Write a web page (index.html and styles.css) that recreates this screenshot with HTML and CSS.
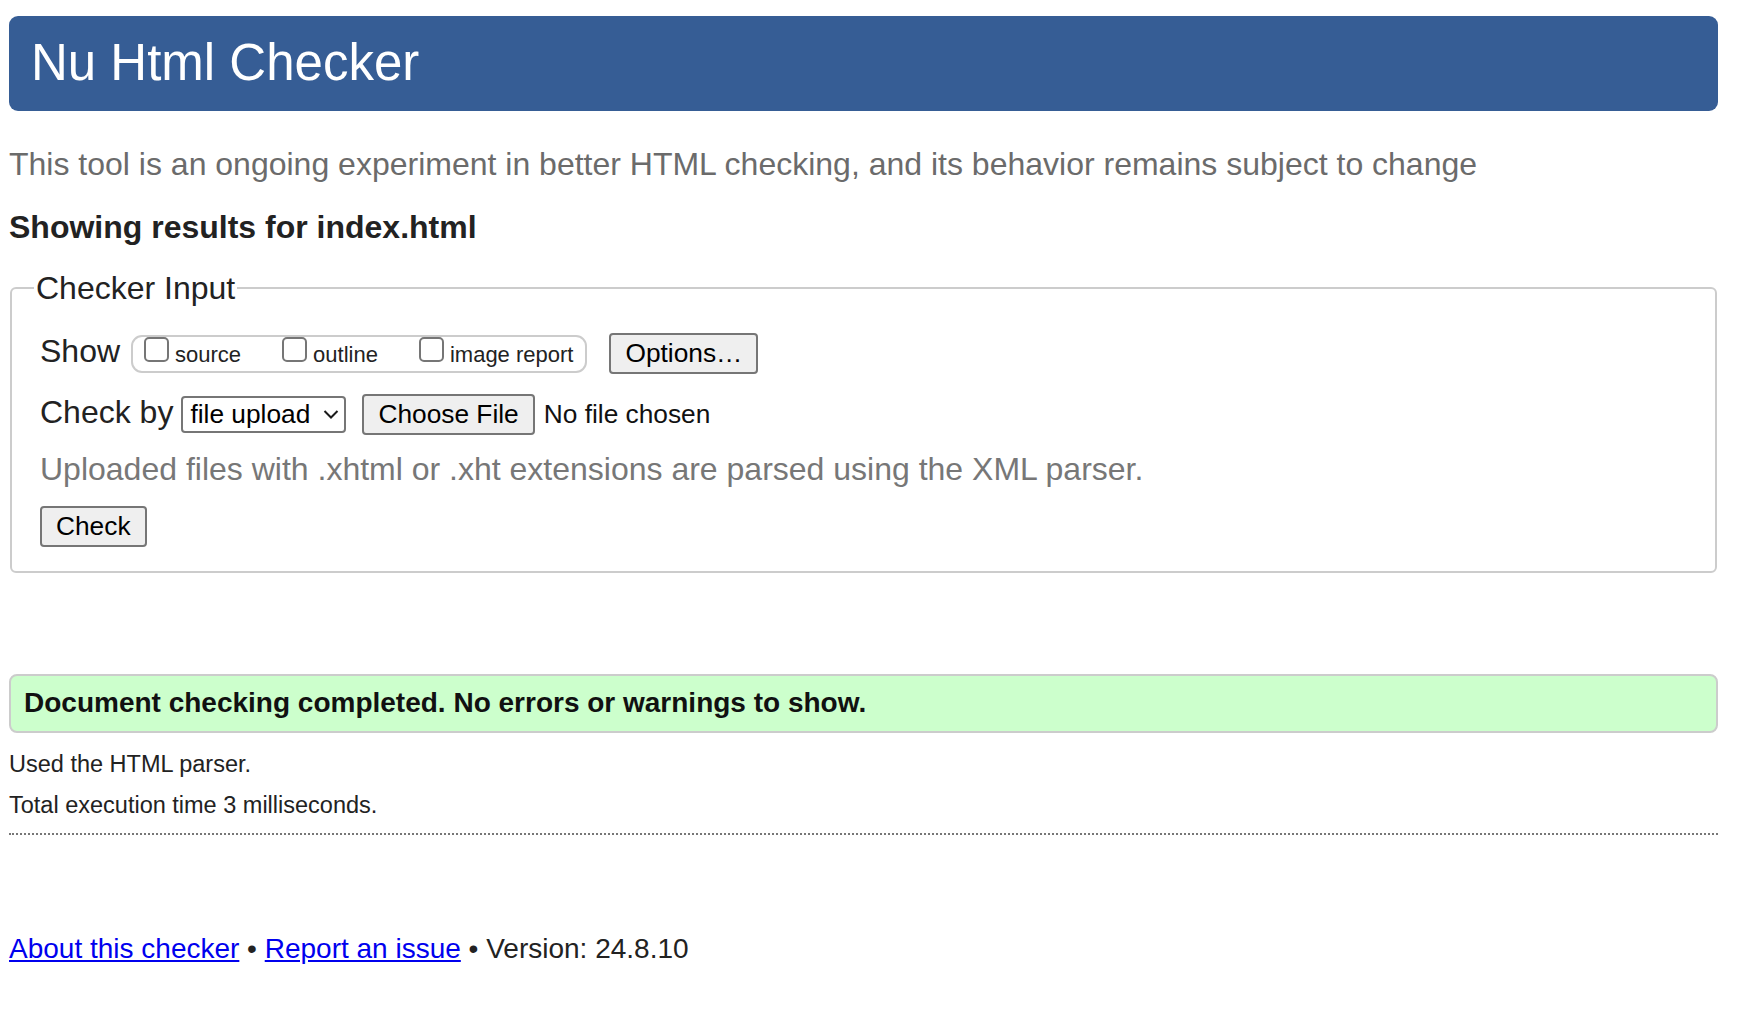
FILE: index.html
```html
<!DOCTYPE html>
<html lang="en">
<head>
<meta charset="utf-8">
<title>Showing results for index.html - Nu Html Checker</title>
<link rel="stylesheet" href="styles.css">
</head>
<body>
<h1 class="title">Nu Html Checker</h1>
<p class="tagline">This tool is an ongoing experiment in better HTML checking, and its behavior remains subject to change</p>
<h2 class="results-for">Showing results for index.html</h2>
<form class="checker-form">
  <fieldset class="checker-input">
    <legend class="legend">Checker Input</legend>
    <div class="row row-show">
      <span class="row-label">Show</span>
      <span class="show-group">
        <label class="opt"><input type="checkbox" class="cb"><span class="opt-text">source</span></label>
        <label class="opt"><input type="checkbox" class="cb"><span class="opt-text">outline</span></label>
        <label class="opt"><input type="checkbox" class="cb"><span class="opt-text">image report</span></label>
      </span>
      <button type="button" class="btn btn-options">Options…</button>
    </div>
    <div class="row row-checkby">
      <span class="row-label">Check by</span>
      <span class="select-wrap">
        <select class="select"><option>file upload</option></select>
        <svg class="chevron" width="16" height="10" viewBox="0 0 16 10" aria-hidden="true"><polyline points="1.5,2 8,8.5 14.5,2" fill="none" stroke="#1a1a1a" stroke-width="2"/></svg>
      </span>
      <button type="button" class="btn btn-file">Choose File</button>
      <span class="file-status">No file chosen</span>
    </div>
    <p class="note">Uploaded files with .xhtml or .xht extensions are parsed using the XML parser.</p>
    <div class="row row-submit">
      <button type="submit" class="btn">Check</button>
    </div>
  </fieldset>
</form>
<p class="success">Document checking completed. No errors or warnings to show.</p>
<p class="details">Used the HTML parser.</p>
<p class="details details-time">Total execution time 3 milliseconds.</p>
<hr class="rule">
<p class="footer"><a href="#" class="link">About this checker</a> • <a href="#" class="link">Report an issue</a> • Version: 24.8.10</p>
</body>
</html>
```

FILE: styles.css
```css
html {
  background: #ffffff;
}

body {
  margin: 0;
  padding: 16px 22px 0 9px;
  font-family: "Liberation Sans", Arial, sans-serif;
  color: #222222;
  background: #ffffff;
}

.title {
  margin: 0;
  padding: 18px 22px 19px;
  background: #365d95;
  color: #ffffff;
  font-size: 51px;
  line-height: 58px;
  font-weight: normal;
  border-radius: 9px;
}

.tagline {
  margin: 35px 0 0;
  font-size: 32px;
  line-height: 37px;
  color: #6b6b6b;
}

.results-for {
  margin: 26px 0 0;
  font-size: 32px;
  line-height: 37px;
  font-weight: bold;
  color: #222222;
}

.checker-form {
  margin: 0;
}

.checker-input {
  margin: 24px 1px 0;
  padding: 27px 27px 24px 28px;
  border: 2px solid #cccccc;
  border-radius: 6px;
  min-inline-size: 0;
}

.legend {
  margin-left: -6px;
  padding: 0 2px;
  font-size: 32px;
  line-height: 36px;
  color: #222222;
}

.row {
  display: flex;
  align-items: baseline;
}

.row-label {
  font-size: 32px;
  line-height: 37px;
}

.show-group {
  display: inline-flex;
  align-items: baseline;
  margin-left: 11px;
  padding: 0 12px 5px 3px;
  border: 2px solid #cccccc;
  border-radius: 11px;
}

.opt {
  display: inline-flex;
  align-items: baseline;
  margin-right: 33px;
}

.opt:last-child {
  margin-right: 0;
}

.cb {
  -webkit-appearance: none;
  appearance: none;
  width: 25px;
  height: 25px;
  margin: 0 6px 0 8px;
  border: 2px solid #767676;
  border-radius: 5px;
  background: #ffffff;
  box-sizing: border-box;
}

.opt-text {
  font-size: 22px;
  line-height: 22px;
  color: #222222;
}

.btn {
  font-family: "Liberation Sans", Arial, sans-serif;
  font-size: 26.3px;
  line-height: 31px;
  padding: 3px 14px;
  border: 2px solid #767676;
  border-radius: 4px;
  background: #efefef;
  color: #000000;
  box-sizing: border-box;
  height: 41px;
}

.btn-options {
  margin-left: 22px;
}

.select-wrap {
  position: relative;
  display: inline-flex;
  margin-left: 8px;
}

.select {
  -webkit-appearance: none;
  appearance: none;
  width: 165px;
  height: 37px;
  box-sizing: border-box;
  margin: 0;
  padding: 0 30px 0 7px;
  border: 2px solid #767676;
  border-radius: 4px;
  background: #ffffff;
  color: #000000;
  font-family: "Liberation Sans", Arial, sans-serif;
  font-size: 26.3px;
}

.chevron {
  position: absolute;
  right: 7px;
  top: 13px;
  pointer-events: none;
}

.btn-file {
  margin-left: 16px;
}

.file-status {
  margin-left: 9px;
  font-size: 26.3px;
  line-height: 31px;
  color: #111111;
}

.row-checkby {
  margin-top: 20px;
}

.note {
  margin: 16px 0 0;
  font-size: 32px;
  line-height: 37px;
  color: #777777;
}

.row-submit {
  margin-top: 18px;
}

.success {
  margin: 101px 0 0;
  padding: 11px 13px 12px;
  border: 2px solid #cccccc;
  border-radius: 8px;
  background: #ccffcc;
  font-size: 28px;
  line-height: 32px;
  font-weight: bold;
  color: #111111;
}

.details {
  margin: 18px 0 0;
  font-size: 23.5px;
  line-height: 27px;
  color: #222222;
}

.details-time {
  margin-top: 14px;
}

.rule {
  margin: 14px 0 0;
  height: 0;
  border: 0;
  border-top: 2px dotted #777777;
}

.footer {
  margin: 98px 0 0;
  font-size: 28px;
  line-height: 32px;
  color: #222222;
}

.link {
  color: #0000ee;
  text-decoration: underline;
}
```
